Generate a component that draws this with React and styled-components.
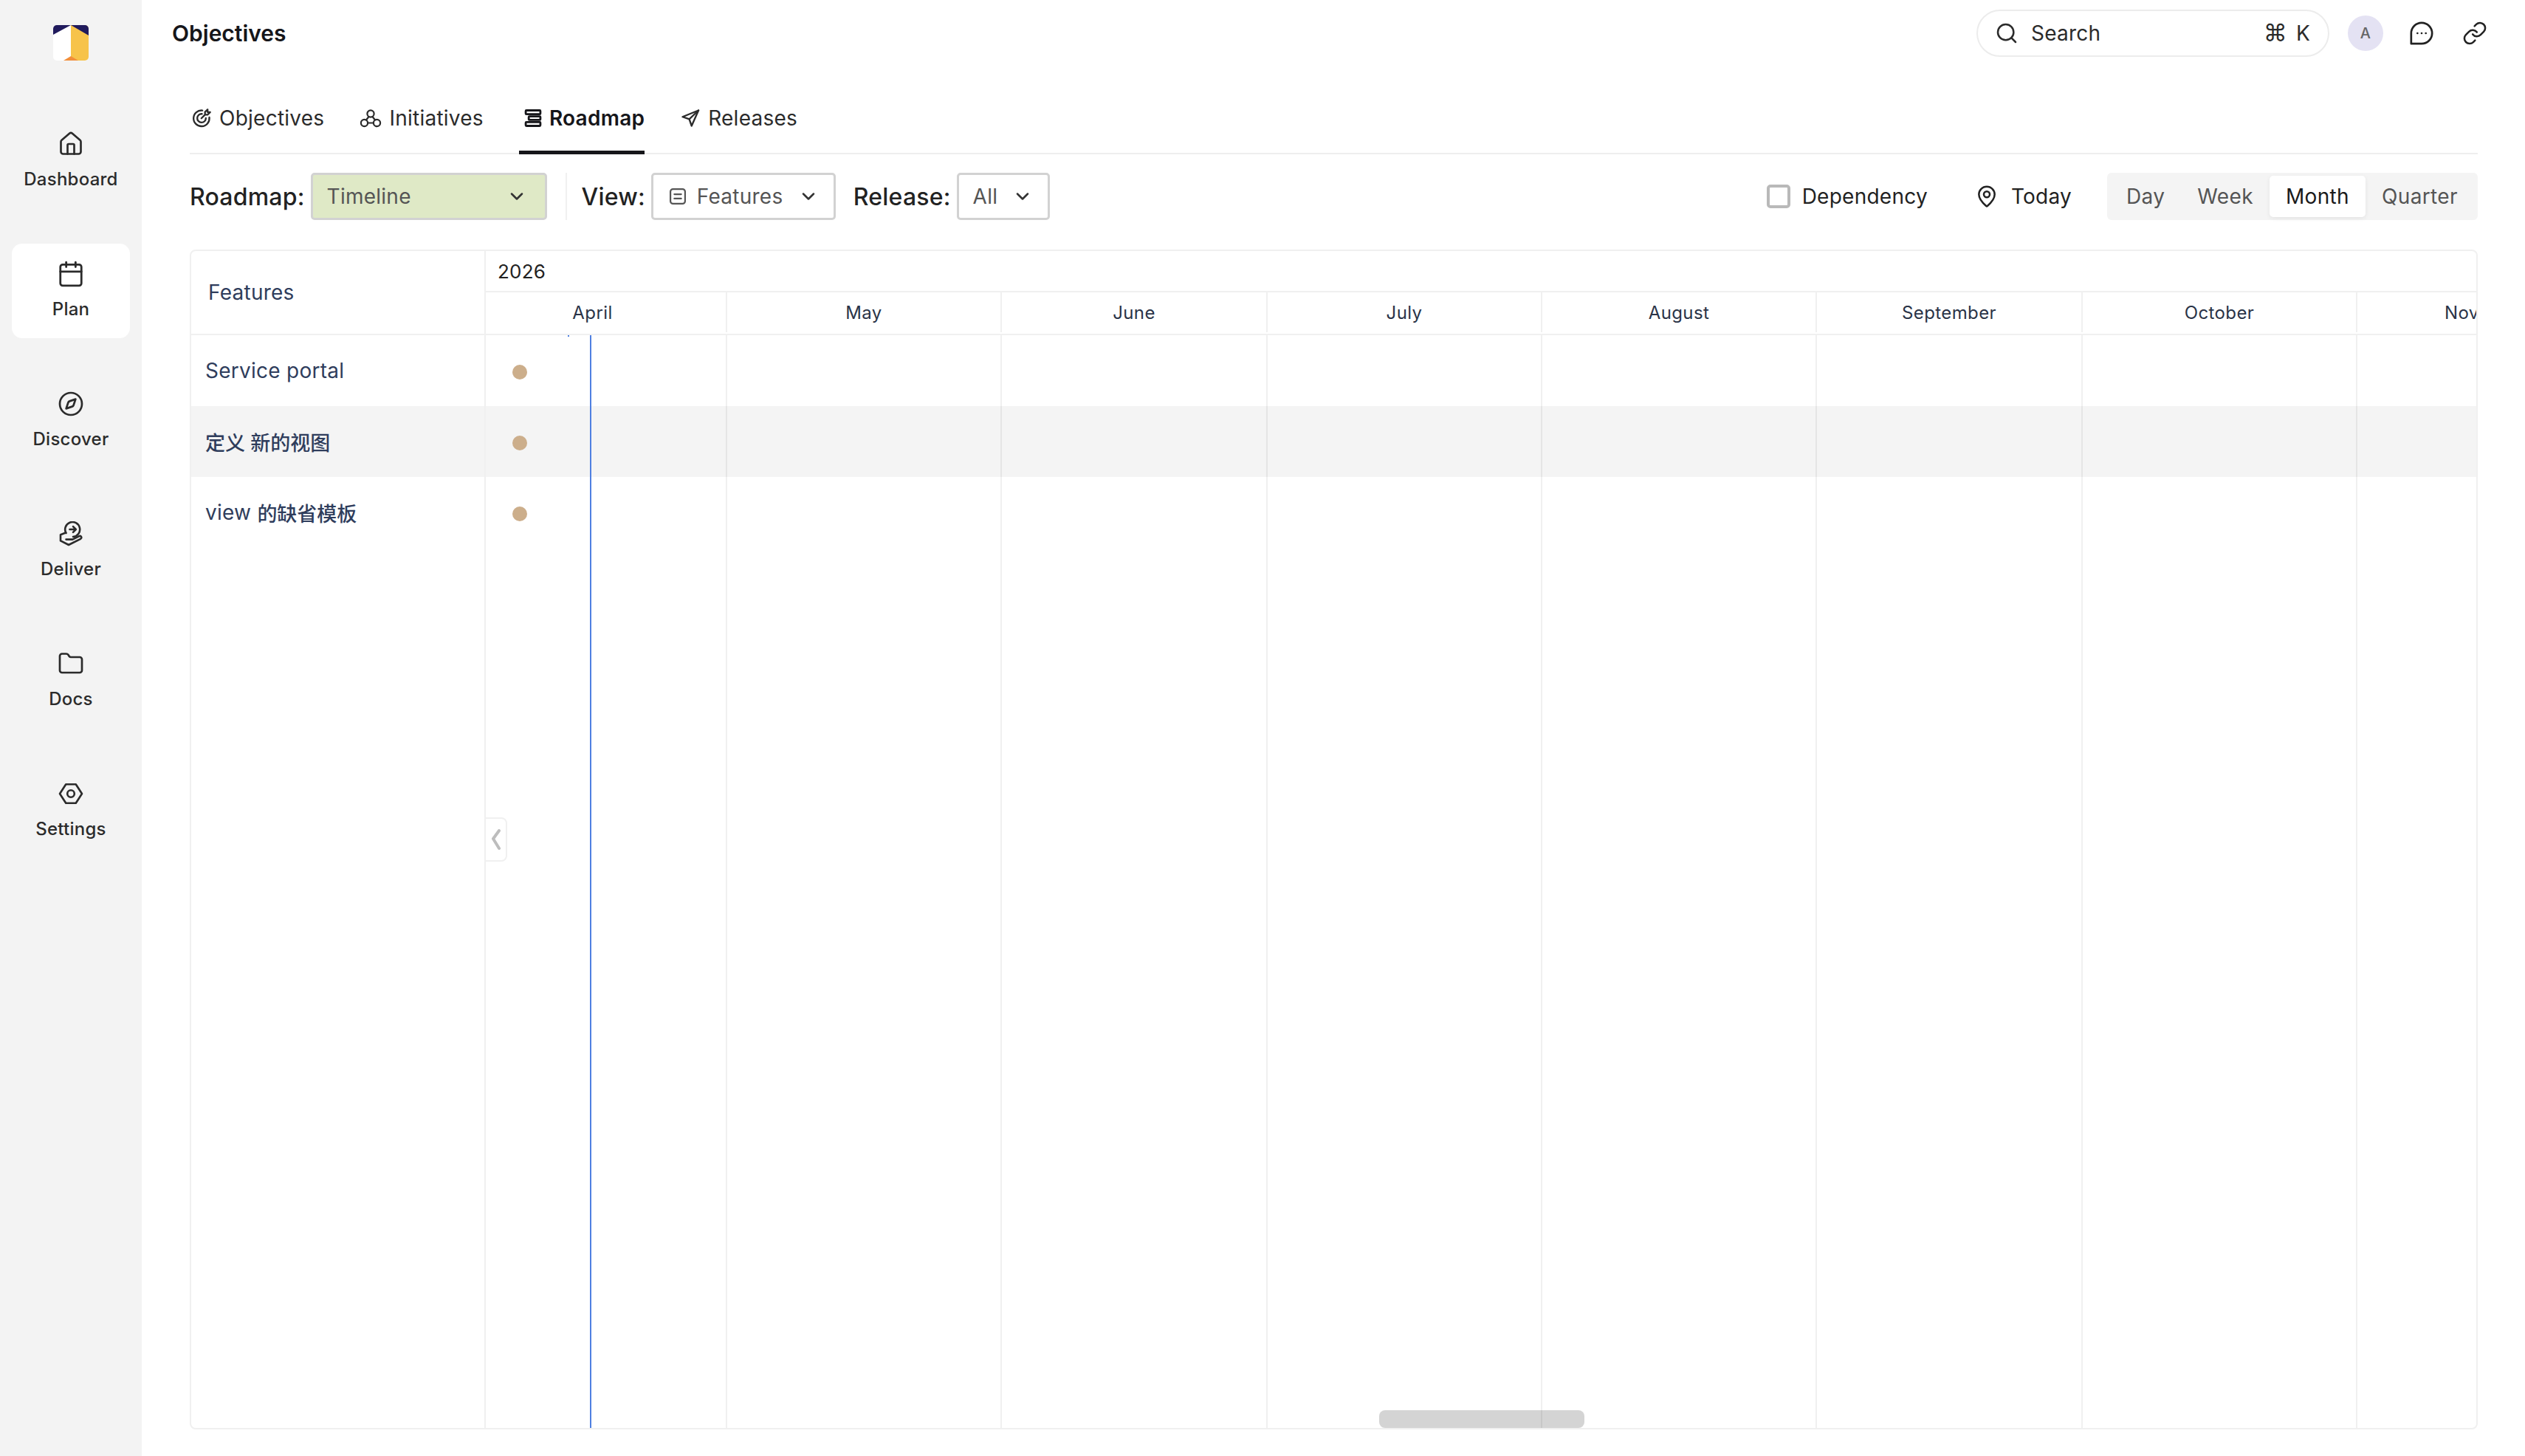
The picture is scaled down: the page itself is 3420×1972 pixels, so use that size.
import React from "react";
import styled, { createGlobalStyle } from "styled-components";
import { ChevronDown, Search as SearchGlyph, Link as LinkGlyph, MapPin, Folder, Calendar, Compass, House } from "lucide-react";

const Global = createGlobalStyle`
  html, body { margin: 0; padding: 0; background: #fff; }
  body { font-family: Inter, "Noto Sans CJK SC", sans-serif; color: #1f1f1f; letter-spacing: .25px; }
  * { box-sizing: border-box; }
`;

const Page = styled.div`
  display: flex;
  width: 3420px;
  height: 1972px;
  overflow: hidden;
`;

const Sidebar = styled.aside`
  width: 192px;
  flex: none;
  background: #f3f3f3;
  display: flex;
  flex-direction: column;
  align-items: center;
  padding-top: 34px;
`;

const LogoWrap = styled.div`
  width: 48px;
  height: 48px;
  margin-bottom: 72px;
  display: flex;
`;

const NavList = styled.nav`
  display: flex;
  flex-direction: column;
  gap: 48px;
`;

const NavItem = styled.div`
  width: 160px;
  height: 128px;
  border-radius: 14px;
  background: ${(p) => (p.$active ? "#fff" : "transparent")};
  display: flex;
  flex-direction: column;
  align-items: center;
  padding-top: 25px;
  gap: 17px;
  color: #2b2b2b;
`;

const NavIcon = styled.div`
  height: 32px;
  display: flex;
  align-items: center;
  justify-content: center;
`;

const NavLabel = styled.span`
  font-size: 24px;
  line-height: 30px;
  font-weight: 500;
  color: #2b2b2b;
`;

const Main = styled.main`
  flex: 1;
  min-width: 0;
  display: flex;
  flex-direction: column;
`;

const TopBar = styled.header`
  height: 90px;
  flex: none;
  display: flex;
  align-items: center;
  padding: 0 51px 0 41px;
`;

const Title = styled.h1`
  margin: 0;
  font-size: 30px;
  line-height: 36px;
  font-weight: 600;
  letter-spacing: 0;
  color: #16161a;
  flex: 1;
`;

const SearchBox = styled.div`
  width: 478px;
  height: 64px;
  border: 2px solid #ececec;
  border-radius: 32px;
  display: flex;
  align-items: center;
  padding: 0 24px 0 23px;
  gap: 17px;
  font-size: 28px;
  color: #2b2b2b;
`;

const SearchText = styled.span`
  flex: 1;
`;

const Kbd = styled.span`
  display: flex;
  align-items: center;
  gap: 12px;
  font-size: 28px;
  color: #2b2b2b;
`;

const KbdSymbol = styled.span`
  font-family: "DejaVu Sans", Inter, sans-serif;
  font-size: 32px;
`;

const Avatar = styled.div`
  width: 48px;
  height: 48px;
  margin-left: 25px;
  border-radius: 50%;
  background: #e4e2f3;
  color: #666;
  font-size: 20px;
  font-weight: 500;
  display: flex;
  align-items: center;
  justify-content: center;
`;

const TopIcon = styled.div`
  display: flex;
  margin-left: ${(p) => p.$gap}px;
  color: #222;
`;

const Content = styled.div`
  flex: 1;
  min-height: 0;
  display: flex;
  flex-direction: column;
  margin: 0 64px 36px 65px;
`;

const Tabs = styled.div`
  height: 119px;
  flex: none;
  display: flex;
  gap: 48px;
  border-bottom: 2px solid #eeeeee;
  padding-left: 2px;
`;

const Tab = styled.div`
  height: 119px;
  flex: none;
  padding-top: ${(p) => (p.$active ? "26px" : "21px")};
  padding-left: ${(p) => (p.$active ? "5px" : "0")};
  display: flex;
  align-items: center;
  gap: ${(p) => (p.$active ? "8px" : "10px")};
  font-size: 28px;
  font-weight: ${(p) => (p.$active ? 600 : 400)};
  color: ${(p) => (p.$active ? "#16161a" : "#2b2b2b")};
  border-bottom: ${(p) => (p.$active ? "5px solid #16161a" : "0")};
`;

const Toolbar = styled.div`
  flex: none;
  height: 64px;
  margin-top: 25px;
  display: flex;
  align-items: center;
`;

const FieldLabel = styled.span`
  font-size: 32px;
  font-weight: 500;
  letter-spacing: .2px;
  color: #222;
  margin-right: 8px;
  margin-left: ${(p) => p.$left || 0}px;
`;

const Select = styled.div`
  height: 64px;
  width: ${(p) => p.$w}px;
  flex: none;
  padding: 0 ${(p) => p.$pr || 24}px 0 19px;
  display: flex;
  align-items: center;
  gap: 12px;
  border: 3px solid #d2d2d2;
  border-radius: 5px;
  background: ${(p) => p.$bg || "#fff"};
  font-size: 28px;
  color: #555;
`;

const SelectValue = styled.span`
  flex: 1;
`;

const VRule = styled.span`
  width: 2px;
  height: 64px;
  background: #f0f0f0;
  margin: 0 20px 0 25px;
`;

const Spacer = styled.div`
  flex: 1;
`;

const CheckRow = styled.div`
  display: flex;
  align-items: center;
  gap: 16px;
  font-size: 28px;
  color: #222;
`;

const Box = styled.span`
  width: 32px;
  height: 32px;
  border: 4px solid #b9b9b9;
  border-radius: 5px;
  background: #fff;
`;

const TodayBtn = styled.div`
  display: flex;
  align-items: center;
  gap: 17px;
  font-size: 28px;
  color: #222;
  margin: 0 48px 0 64px;
`;

const Segments = styled.div`
  display: flex;
  align-items: center;
  height: 64px;
  width: 502px;
  padding: 4px;
  background: #f4f4f4;
  border-radius: 6px;
`;

const Segment = styled.div`
  height: 56px;
  padding: 0 ${(p) => p.$pad}px;
  display: flex;
  align-items: center;
  font-size: 28px;
  letter-spacing: .35px;
  color: ${(p) => (p.$active ? "#1a1a1a" : "#555")};
  background: ${(p) => (p.$active ? "#fff" : "transparent")};
  border-radius: 5px;
  box-shadow: ${(p) => (p.$active ? "0 2px 6px rgba(0,0,0,.07)" : "none")};
`;

const Table = styled.section`
  margin-top: 40px;
  flex: 1;
  min-height: 0;
  border: 2px solid #f0f0f0;
  border-radius: 8px;
  display: flex;
  position: relative;
  overflow: hidden;
`;

const LeftCol = styled.div`
  width: 399px;
  flex: none;
  border-right: 2px solid #f0f0f0;
  display: flex;
  flex-direction: column;
  position: relative;
  z-index: 1;
`;

const LeftHead = styled.div`
  height: 114px;
  flex: none;
  display: flex;
  align-items: center;
  padding-left: 23px;
  border-bottom: 2px solid #f0f0f0;
  font-size: 28px;
  color: #2f3d5c;
`;

const FeatureRow = styled.div`
  height: 96px;
  flex: none;
  display: flex;
  align-items: center;
  white-space: pre;
  padding-left: 19px;
  font-size: 28px;
  color: #2f3d5c;
  background: ${(p) => (p.$shade ? "#f4f4f4" : "transparent")};
`;

const Cjk = styled.span`
  font-size: 27px;
  font-weight: 500;
  letter-spacing: 0;
`;

const Timeline = styled.div`
  flex: 1;
  min-width: 0;
  display: flex;
  flex-direction: column;
  position: relative;
`;

const YearRow = styled.div`
  height: 56px;
  flex: none;
  display: flex;
  align-items: center;
  padding-left: 16px;
  font-size: 26px;
  color: #222;
  border-bottom: 2px solid #f0f0f0;
`;

const MonthRow = styled.div`
  height: 58px;
  flex: none;
  display: flex;
  border-bottom: 2px solid #f0f0f0;
`;

const Month = styled.div`
  width: ${(p) => p.$w}px;
  flex: none;
  height: 54px;
  display: flex;
  align-items: center;
  justify-content: ${(p) => (p.$last ? "flex-start" : "center")};
  padding-left: ${(p) => (p.$last ? "118px" : "0")};
  padding-right: ${(p) => p.$inset || 0}px;
  font-size: 24px;
  font-weight: 400;
  letter-spacing: .4px;
  color: #2a3347;
  border-right: ${(p) => (p.$last ? "0" : "2px solid #f0f0f0")};
  overflow: hidden;
  white-space: nowrap;
`;

const Body = styled.div`
  flex: 1;
  min-height: 0;
  position: relative;
`;

const Columns = styled.div`
  position: absolute;
  inset: 0;
  display: flex;
`;

const Column = styled.div`
  width: ${(p) => p.$w}px;
  flex: none;
  border-right: ${(p) => (p.$last ? "0" : "2px solid #f0f0f0")};
`;

const Rows = styled.div`
  position: absolute;
  inset: 0;
  display: flex;
  flex-direction: column;
`;

const BarRow = styled.div`
  height: 96px;
  flex: none;
  display: flex;
  align-items: center;
  padding: 4px 0 0 36px;
  background: ${(p) => (p.$shade ? "rgba(0,0,0,.045)" : "transparent")};
`;

const Dot = styled.span`
  width: 20px;
  height: 20px;
  border-radius: 50%;
  background: #ccae8b;
`;

const TodayLine = styled.div`
  position: absolute;
  top: 0;
  bottom: 0;
  left: 141px;
  width: 2px;
  background: #4f80e1;
`;

const TodayTick = styled.div`
  position: absolute;
  top: 0;
  left: 111px;
  width: 2px;
  height: 2px;
  background: #4f80e1;
`;

const ScrollThumb = styled.div`
  position: absolute;
  bottom: 0;
  left: 1210px;
  width: 278px;
  height: 24px;
  border-radius: 8px;
  background: rgba(0, 0, 0, 0.17);
`;

const Collapse = styled.div`
  position: absolute;
  left: 399px;
  top: 767px;
  width: 29px;
  height: 60px;
  background: #fff;
  border: 2px solid #f0f0f0;
  border-left: 0;
  border-radius: 0 8px 8px 0;
  display: flex;
  align-items: center;
  justify-content: center;
  z-index: 2;
`;

const Icon = ({ size = 32, h, sw = 2, vb = "0 0 24 24", children }) => (
  <svg width={size} height={h || size} viewBox={vb} fill="none" stroke="currentColor" strokeWidth={sw} strokeLinecap="round" strokeLinejoin="round">
    {children}
  </svg>
);

const Logo = () => (
  <svg width="48" height="48" viewBox="0 0 48 48">
    <defs>
      <clipPath id="logoClip"><rect width="48" height="48" rx="5" /></clipPath>
    </defs>
    <g clipPath="url(#logoClip)">
      <rect width="48" height="48" fill="#fff" />
      <path d="M24 0H48V48H24Z" fill="#f7c34a" />
      <path d="M0 0H24L0 13Z" fill="#201a5c" />
      <path d="M24 0H48V14Z" fill="#201a5c" />
      <path d="M14 48L24 42L34 48Z" fill="#f28f3b" />
    </g>
  </svg>
);

const DeliverIcon = () => (
  <Icon size={32} h={34} sw={2.6} vb="0 0 32 34">
    <path d="M9.5 16A10 10 0 1 1 19 21" />
    <path d="M14.5 11h8M19 7.2l3.8 3.8L19 14.8" />
    <path d="M9 15.5 2 18.2v8.2L13 32l16.2-8.2c2.2-1.6.6-4.6-1.8-3.6l-9 4.4H9.5" />
  </Icon>
);

const SettingsIcon = () => (
  <Icon size={36} sw={1.75}>
    <path d="M7.5 3.5h9L22 12l-5.5 8.5h-9L2 12Z" />
    <circle cx="12" cy="12" r="3.2" />
  </Icon>
);

const TargetIcon = () => (
  <Icon size={28}>
    <path d="M13 3.1A9.2 9.2 0 1 0 21 11" />
    <path d="M12.5 7.1A5 5 0 1 0 17 12" />
    <path d="M11.8 12.2 16 8M16 8V4.8L19 2v3h3l-3 3Z" />
  </Icon>
);

const NetworkIcon = () => (
  <Icon size={30} h={26} vb="0 0 30 26" sw={2.2}>
    <circle cx="15" cy="7" r="4.6" />
    <circle cx="6.5" cy="19.5" r="4.6" />
    <circle cx="23.5" cy="19.5" r="4.6" />
    <path d="M12.5 11 9 15.5M17.5 11 21 15.5M11 19.5h8" />
  </Icon>
);

const RoadmapIcon = () => (
  <Icon size={28} sw={2.4}>
    <rect x="3.5" y="3" width="17" height="4.4" rx=".8" />
    <rect x="7" y="10" width="13.5" height="4" rx=".8" />
    <rect x="3.5" y="16.6" width="17" height="4.4" rx=".8" />
  </Icon>
);

const SendIcon = () => (
  <Icon size={28}>
    <path d="M21.5 3 3 10.5l7.8 2.7L13.5 21Z" />
    <path d="M21.5 3 10.8 13.2" />
  </Icon>
);

const ListIcon = () => (
  <Icon size={28} sw={1.9}>
    <rect x="3.5" y="3.5" width="17" height="17" rx="3" />
    <path d="M8 9.5h8M8 14.5h8" />
  </Icon>
);

const ChatIcon = () => (
  <Icon size={34} sw={1.9}>
    <path d="M2 22V12a10 10 0 1 1 10 10Z" />
    <path d="M8 12h.01M12 12h.01M16 12h.01" />
  </Icon>
);

const navItems = [
  ["Dashboard", <House size={36} strokeWidth={1.8} />],
  ["Plan", <Calendar size={38} strokeWidth={1.75} />, true],
  ["Discover", <Compass size={36} strokeWidth={1.8} />],
  ["Deliver", <DeliverIcon />],
  ["Docs", <Folder size={36} strokeWidth={1.8} />],
  ["Settings", <SettingsIcon />],
];

const months = [
  ["April", 327, false, 36], ["May", 372], ["June", 360], ["July", 372],
  ["August", 372], ["September", 360], ["October", 372], ["Nov", 170, true],
];

const features = [
  ["Service portal", ""],
  ["", "定义 新的视图"],
  ["view ", "的缺省模板"],
];

export default function App() {
  return (
    <Page>
      <Global />
      <Sidebar>
        <LogoWrap><Logo /></LogoWrap>
        <NavList>
          {navItems.map(([label, icon, active]) => (
            <NavItem key={label} $active={active}>
              <NavIcon>{icon}</NavIcon>
              <NavLabel>{label}</NavLabel>
            </NavItem>
          ))}
        </NavList>
      </Sidebar>
      <Main>
        <TopBar>
          <Title>Objectives</Title>
          <SearchBox>
            <SearchGlyph size={32} strokeWidth={1.9} />
            <SearchText>Search</SearchText>
            <Kbd><KbdSymbol>⌘</KbdSymbol><span>K</span></Kbd>
          </SearchBox>
          <Avatar>A</Avatar>
          <TopIcon $gap={35}><ChatIcon /></TopIcon>
          <TopIcon $gap={38}><LinkGlyph size={34} strokeWidth={1.8} /></TopIcon>
        </TopBar>
        <Content>
          <Tabs>
            <Tab><TargetIcon />Objectives</Tab>
            <Tab><NetworkIcon />Initiatives</Tab>
            <Tab $active><RoadmapIcon />Roadmap</Tab>
            <Tab><SendIcon />Releases</Tab>
          </Tabs>
          <Toolbar>
            <FieldLabel>Roadmap:</FieldLabel>
            <Select $w={320} $bg="#dfe9c6">
              <SelectValue>Timeline</SelectValue>
              <ChevronDown size={28} strokeWidth={2.2} color="#333" />
            </Select>
            <VRule />
            <FieldLabel>View:</FieldLabel>
            <Select $w={250} $pr={20}>
              <ListIcon />
              <SelectValue>Features</SelectValue>
              <ChevronDown size={28} strokeWidth={2.2} color="#333" />
            </Select>
            <FieldLabel $left={24}>Release:</FieldLabel>
            <Select $w={126} $pr={20}>
              <SelectValue>All</SelectValue>
              <ChevronDown size={28} strokeWidth={2.2} color="#333" />
            </Select>
            <Spacer />
            <CheckRow><Box />Dependency</CheckRow>
            <TodayBtn><MapPin size={32} strokeWidth={1.9} />Today</TodayBtn>
            <Segments>
              <Segment $pad={22}>Day</Segment>
              <Segment $pad={22}>Week</Segment>
              <Segment $active $pad={22}>Month</Segment>
              <Segment $pad={22}>Quarter</Segment>
            </Segments>
          </Toolbar>
          <Table>
            <LeftCol>
              <LeftHead>Features</LeftHead>
              {features.map(([latin, cjk], i) => (
                <FeatureRow key={i} $shade={i === 1}>
                  {latin}
                  {cjk ? <Cjk>{cjk}</Cjk> : null}
                </FeatureRow>
              ))}
            </LeftCol>
            <Timeline>
              <YearRow>2026</YearRow>
              <MonthRow>
                {months.map(([m, w, last, inset]) => (
                  <Month key={m} $w={w} $last={last} $inset={inset}>{m}</Month>
                ))}
              </MonthRow>
              <Body>
                <Columns>
                  {months.map(([m, w, last]) => (
                    <Column key={m} $w={w} $last={last} />
                  ))}
                </Columns>
                <Rows>
                  {features.map((f, i) => (
                    <BarRow key={i} $shade={i === 1}><Dot /></BarRow>
                  ))}
                </Rows>
                <TodayTick />
                <TodayLine />
                <ScrollThumb />
              </Body>
            </Timeline>
            <Collapse>
              <svg width="14" height="28" viewBox="0 0 14 28" fill="none" stroke="#bdbdbd" strokeWidth="4" strokeLinecap="round" strokeLinejoin="round">
                <path d="M11 2 3 13l8 13" />
              </svg>
            </Collapse>
          </Table>
        </Content>
      </Main>
    </Page>
  );
}
